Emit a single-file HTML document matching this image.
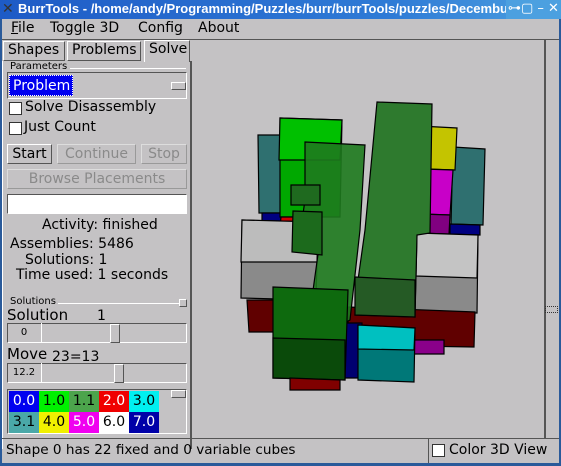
<!DOCTYPE html><html><head><style>
*{margin:0;padding:0;box-sizing:border-box}
body{width:561px;height:466px;background:#c4c2c4;font-family:"DejaVu Sans","Liberation Sans",sans-serif;font-size:14px;color:#000;position:relative;overflow:hidden}
.a{position:absolute;white-space:nowrap}
.sunk{border:1px solid;border-color:#555 #fff #fff #555}
.rais{border:1px solid;border-color:#fff #555 #555 #fff}
.btn{border:1px solid;border-color:#fff #555 #555 #fff;text-align:center;line-height:18px}
.dis{color:#8a8a8a;border-color:#ddd #999 #999 #ddd}
.cb{width:13px;height:13px;background:#fff;border:1px solid #333}
.c{position:absolute;width:30px;height:21px;text-align:center;line-height:21px;font-size:14px}
</style></head><body>
<div class="a" style="left:0;top:0;width:561px;height:466px;border:2px solid #2a5a9a;border-top:0"></div>
<div class="a" style="left:0;top:0;width:561px;height:19px;background:linear-gradient(90deg,#1e5bc6,#2f7bd6 70%,#4ca0e0);color:#fff;font-family:'Liberation Sans',sans-serif;font-weight:bold;font-size:13px;line-height:18px;padding-left:18px;overflow:hidden">BurrTools - /home/andy/Programming/Puzzles/burr/burrTools/puzzles/Decemburr.xmp</div>
<div class="a" style="left:2px;top:2px;color:#333;font-size:14px;line-height:14px">✕</div>
<div class="a" style="left:506px;top:0;width:55px;height:19px;background:#4ca0e0;color:#fff;font-size:13px;line-height:18px;padding-left:2px">⊶▢ – ✕</div>
<div class="a" style="left:2px;top:19px;width:557px;height:21px;border-bottom:1px solid #555"></div>
<div class="a" style="left:11px;top:20px;font-size:14px"><u>F</u>ile</div>
<div class="a" style="left:50px;top:20px">Toggle 3D</div>
<div class="a" style="left:138px;top:20px">Config</div>
<div class="a" style="left:198px;top:20px">About</div>
<div class="a rais" style="left:3px;top:41px;width:62px;height:20px;padding-left:4px">Shapes</div>
<div class="a rais" style="left:67px;top:41px;width:74px;height:20px;padding-left:4px">Problems</div>
<div class="a rais" style="left:144px;top:40px;width:46px;height:22px;padding-left:4px;border-bottom:0">Solve</div>
<div class="a" style="left:2px;top:61px;width:190px;height:388px;border-right:2px solid #555;border-left:1px solid #fff"></div>
<div class="a" style="left:10px;top:61px;font-size:10px">Parameters</div>
<div class="a" style="left:70px;top:68px;width:116px;height:1px;background:#555;border-bottom:1px solid #fff"></div>
<div class="a sunk" style="left:7px;top:72px;width:180px;height:27px"></div>
<div class="a" style="left:9px;top:75px;width:64px;height:21px;background:#0000f0;color:#fff;padding-left:3px;font-size:14px;line-height:21px;border:1px dotted #fff">Problem</div>
<div class="a rais" style="left:171px;top:82px;width:15px;height:8px"></div>
<div class="a cb" style="left:9px;top:102px"></div><div class="a" style="left:25px;top:99px">Solve Disassembly</div>
<div class="a cb" style="left:9px;top:122px"></div><div class="a" style="left:24px;top:119px">Just Count</div>
<div class="a btn" style="left:7px;top:144px;width:45px;height:20px">Start</div>
<div class="a btn dis" style="left:57px;top:144px;width:79px;height:20px">Continue</div>
<div class="a btn dis" style="left:141px;top:144px;width:46px;height:20px">Stop</div>
<div class="a btn dis" style="left:7px;top:169px;width:180px;height:20px">Browse Placements</div>
<div class="a sunk" style="left:7px;top:194px;width:180px;height:20px;background:#fff"></div>
<div class="a" style="left:42px;top:217px">Activity: finished</div>
<div class="a" style="left:10px;top:236px">Assemblies: 5486</div>
<div class="a" style="left:25px;top:252px">Solutions: 1</div>
<div class="a" style="left:16px;top:267px">Time used: 1 seconds</div>
<div class="a" style="left:10px;top:296px;font-size:10px">Solutions</div>
<div class="a" style="left:58px;top:303px;width:122px;height:1px;background:#555;border-bottom:1px solid #fff"></div>
<div class="a rais" style="left:179px;top:299px;width:8px;height:8px"></div>
<div class="a" style="left:7px;top:306px;font-size:15px">Solution</div>
<div class="a" style="left:97px;top:308px">1</div>
<div class="a sunk" style="left:7px;top:323px;width:180px;height:20px"></div>
<div class="a" style="left:7px;top:323px;width:35px;height:20px;border-right:1px solid #fff;text-align:center;font-size:10px;line-height:20px">0</div>
<div class="a rais" style="left:110px;top:324px;width:10px;height:19px"></div>
<div class="a" style="left:7px;top:345px;font-size:15px">Move <span style="font-size:14px;position:relative;top:2px">23=13</span></div>
<div class="a sunk" style="left:7px;top:363px;width:180px;height:20px"></div>
<div class="a" style="left:7px;top:363px;width:35px;height:20px;border-right:1px solid #fff;text-align:center;font-size:10px;line-height:20px">12.2</div>
<div class="a rais" style="left:114px;top:364px;width:10px;height:19px"></div>
<div class="a sunk" style="left:7px;top:389px;width:180px;height:45px"></div>
<div class="a rais" style="left:171px;top:390px;width:15px;height:8px"></div>
<div class="c" style="left:9px;top:391px;background:#0000f0;color:#fff">0.0</div>
<div class="c" style="left:39px;top:391px;background:#00f000">1.0</div>
<div class="c" style="left:69px;top:391px;background:#4ca44c">1.1</div>
<div class="c" style="left:99px;top:391px;background:#f00000;color:#fff">2.0</div>
<div class="c" style="left:129px;top:391px;background:#00f0f0">3.0</div>
<div class="c" style="left:9px;top:412px;background:#4aa8a8">3.1</div>
<div class="c" style="left:39px;top:412px;background:#f0f000">4.0</div>
<div class="c" style="left:69px;top:412px;background:#f000f0;color:#fff">5.0</div>
<div class="c" style="left:99px;top:412px;background:#fff">6.0</div>
<div class="c" style="left:129px;top:412px;background:#0000a8;color:#fff">7.0</div>
<div class="a" style="left:544px;top:40px;width:2px;height:398px;background:#555"></div>
<div class="a rais" style="left:545px;top:306px;width:13px;height:7px;border:1px dotted #333"></div>
<svg class="a" style="left:0;top:0" width="561" height="466" stroke="#000" stroke-width="1.2">
<polygon points="258,135 283,135 283,213 259,213" fill="#2f7070"/>
<polygon points="453,147 485,149 483,225 451,224" fill="#2f7070"/>
<polygon points="262,213 283,213 283,240 262,240" fill="#000080"/>
<polygon points="450,224 480,225 480,235 450,235" fill="#000080"/>
<polygon points="280,118 342,120 340,217 280,217" fill="#00a800"/>
<polygon points="280,118 342,120 340,160 279,160" fill="#00c000"/>
<polygon points="281,217 300,217 296,245 278,245" fill="#d00000"/>
<polygon points="400,125 457,128 455,170 398,168" fill="#c4c400"/>
<polygon points="393,168 453,170 450,215 391,213" fill="#c800c8"/>
<polygon points="391,213 450,215 448,253 390,252" fill="#800080"/>
<polygon points="242,220 318,222 316,300 241,298" fill="#8a8a8a"/>
<polygon points="242,220 318,222 317,262 241,262" fill="#bcbcbc"/>
<polygon points="247,300 278,300 278,332 249,332" fill="#600000"/>
<polygon points="417,233 478,235 477,313 415,312" fill="#8a8a8a"/>
<polygon points="417,233 478,235 477,278 416,276" fill="#c4c4c4"/>
<polygon points="348,307 475,312 474,347 348,345" fill="#600000"/>
<polygon points="413,340 444,340 444,354 413,354" fill="#8a008a"/>
<polygon points="340,323 362,323 362,378 340,378" fill="#000070"/>
<polygon points="358,325 415,328 414,382 358,380" fill="#007878"/>
<polygon points="358,325 415,328 414,350 358,349" fill="#00c0c0"/>
<polygon points="377,102 432,104 430,233 417,235 415,317 355,315 358,280 365,230" fill="#2e7a2e"/>
<polygon points="355,277 415,280 415,317 355,315" fill="#255a25"/>
<polygon points="305,142 365,145 360,230 350,320 330,330 310,312 320,240 300,235 305,200" fill="#1e7a1e" fill-opacity="0.9"/>
<polygon points="291,185 320,185 320,205 291,205" fill="#1f6a1f"/>
<polygon points="293,211 322,212 322,255 292,252" fill="#1c6a1c"/>
<polygon points="273,287 348,290 345,380 273,378" fill="#0e6a0e"/>
<polygon points="273,338 345,340 345,380 273,378" fill="#0a4a0a"/>
<polygon points="290,378 340,380 340,390 290,390" fill="#800000"/>
</svg>
<div class="a" style="left:2px;top:438px;width:557px;height:1px;background:#555"></div>
<div class="a" style="left:6px;top:442px;font-size:13.6px">Shape 0 has 22 fixed and 0 variable cubes</div>
<div class="a" style="left:428px;top:438px;width:1px;height:25px;background:#555"></div>
<div class="a cb" style="left:432px;top:444px"></div>
<div class="a" style="left:449px;top:442px">Color 3D View</div>
<div class="a" style="left:0;top:463px;width:561px;height:3px;background:#2a5a9a"></div>
</body></html>
